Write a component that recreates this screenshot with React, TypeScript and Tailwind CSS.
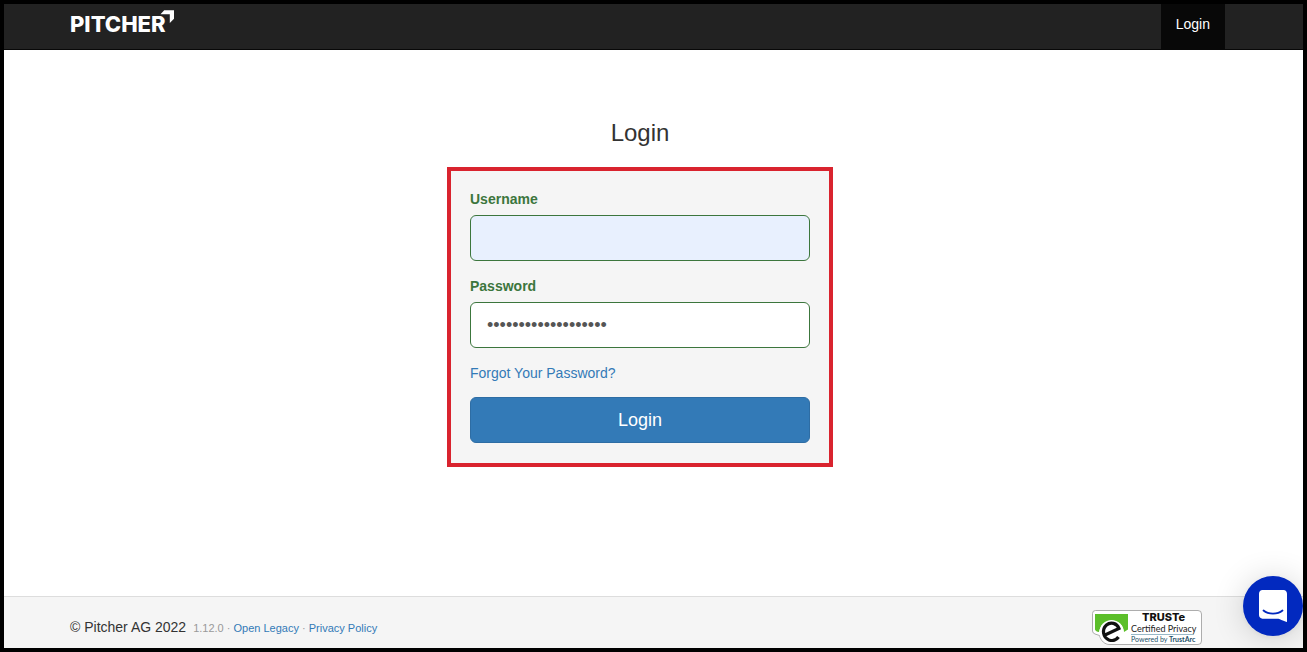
import React, { useState } from 'react';

const container = 'mx-auto w-full max-w-[1170px] px-[15px]';

function Logo() {
  return (
    <a href="#home" className="flex items-start" aria-label="Pitcher">
      <span className="pt-[10px] font-['Inter',sans-serif] text-[22px] leading-5 font-extrabold text-white">
        PITCHER
      </span>
      <svg viewBox="0 0 14 14" className="mt-1.5 -ml-1.5 h-[14px] w-[14px]" aria-hidden="true">
        <path d="M4.200 .3H14V8.800L9.800 13V4.300H.5Z" fill="#fff" />
      </svg>
    </a>
  );
}

function Header() {
  return (
    <header className="border-b border-[#080808] bg-[#222] pr-[27px]">
      <div className="mx-auto flex h-[45px] w-full max-w-[1170px] items-stretch justify-between pl-[15px]">
        <Logo />
        <nav className="flex">
          <a href="#login" className="bg-[#080808] px-[15px] py-[10px] text-sm leading-5 text-white">
            Login
          </a>
        </nav>
      </div>
    </header>
  );
}

function LoginForm() {
  const [username, setUsername] = useState('');
  const [password, setPassword] = useState('pitcher-demo-accoun');

  return (
    <form
      onSubmit={(e) => e.preventDefault()}
      className="w-full max-w-[386px] border-4 border-[#d9232e] bg-[#f5f5f5] px-[19px] pt-[18px] pb-5"
    >
      <label htmlFor="username" className="mb-1.5 block text-sm leading-5 font-bold text-[#3c763d]">
        Username
      </label>
      <input
        id="username"
        type="text"
        value={username}
        onChange={(e) => setUsername(e.target.value)}
        className="mb-[15px] block h-[46px] w-full rounded-md border border-[#3c763d] bg-[#e8f0fe] px-4 text-lg text-[#555] outline-none"
      />
      <label htmlFor="password" className="mb-1.5 block text-sm leading-5 font-bold text-[#3c763d]">
        Password
      </label>
      <input
        id="password"
        type="password"
        value={password}
        onChange={(e) => setPassword(e.target.value)}
        className="mb-[15px] block h-[46px] w-full rounded-md border border-[#3c763d] bg-white px-4 text-lg text-[#555] outline-none"
      />
      <a href="#forgot" className="mb-[14px] block text-sm leading-5 text-[#337ab7]">
        Forgot Your Password?
      </a>
      <button
        type="submit"
        className="block h-[46px] w-full rounded-md border border-[#2e6da4] bg-[#337ab7] text-lg text-white"
      >
        Login
      </button>
    </form>
  );
}

function PrivacyBadge() {
  return (
    <a href="#truste" aria-label="TRUSTe Certified Privacy">
      <svg viewBox="0 0 110 35" className="block h-[35px] w-[110px]">
        <path
          d="M3.500 .5H106a3.500 3.500 0 0 1 3.500 3.500V31a3.500 3.500 0 0 1-3.500 3.500H18C12.500 34.500 9 31 7.500 25.500L3 24A3.500 3.500 0 0 1 .5 21V3.500A3 3 0 0 1 3.500 .5Z"
          fill="#fff"
          stroke="#999"
          strokeWidth=".8"
        />
        <path d="M3 4H36V19.500L32 22C31 7 10 7 7 22C5 22 3.500 21 3 19.500Z" fill="#5cbf2a" />
        <circle cx="19.500" cy="22" r="12" fill="#fff" />
        <path
          d="M13 25L27 18.500C25 13 18.500 11.500 14.500 15C9.500 19.500 11 27.500 17 30C20.500 31.300 24.500 30 26.500 27"
          fill="none"
          stroke="#111"
          strokeWidth="3.200"
        />
        <text x="50" y="11" fontFamily="Inter, sans-serif" fontSize="11" fontWeight="800" fill="#111">
          TRUSTe
        </text>
        <text x="39" y="22" fontFamily="Lato, sans-serif" fontSize="9" fill="#222">
          Certified Privacy
        </text>
        <path d="M39 24.500H102" stroke="#6b9bb0" strokeWidth=".7" />
        <text x="39" y="32" fontFamily="Lato, sans-serif" fontSize="7" fill="#1d5068">
          Powered by <tspan fontWeight="700">TrustArc</tspan>
        </text>
      </svg>
    </a>
  );
}

function Footer() {
  return (
    <footer className="border-t border-[#ddd] bg-[#f5f5f5] pr-[27px]">
      <div className={`${container} flex h-[51px] items-start justify-between`}>
        <p className="pt-5 text-sm leading-5 text-[#333]">
          © Pitcher AG 2022
          <small className="ml-[7px] text-[11px] text-[#999]">
            1.12.0 · <a href="#legacy" className="text-[#337ab7]">Open Legacy</a> ·{' '}
            <a href="#privacy" className="text-[#337ab7]">Privacy Policy</a>
          </small>
        </p>
        <div className="pt-[13px] pr-2">
          <PrivacyBadge />
        </div>
      </div>
    </footer>
  );
}

function ChatButton() {
  return (
    <button
      type="button"
      aria-label="Open chat"
      className="fixed right-1 bottom-4 flex h-[60px] w-[60px] items-center justify-center rounded-full bg-[#0229bf] shadow-[0_1px_6px_rgba(0,0,0,0.06),0_2px_32px_rgba(0,0,0,0.16)]"
    >
      <svg viewBox="0 0 28 32" className="h-8 w-7" aria-hidden="true">
        <path d="M28 32s-4.714-1.855-8.527-3.340H3.437C1.540 28.660 0 27.026 0 25.013V3.644C0 1.633 1.540 0 3.437 0h21.125C26.460 0 28 1.632 28 3.644V32Z" fill="#fff" />
        <path d="M4.500 20.500C9.500 24.600 18.500 24.600 23.500 20.500" fill="none" stroke="#0229bf" strokeWidth="1.800" strokeLinecap="round" />
      </svg>
    </button>
  );
}

export default function App() {
  return (
    <div className="flex min-h-screen flex-col border-4 border-black bg-white font-['Liberation_Sans',Arial,sans-serif]">
      <Header />
      <main className="flex grow flex-col items-center pt-[70px] pr-[27px]">
        <h1 className="mb-[21px] text-2xl leading-[26px] text-[#333]">Login</h1>
        <LoginForm />
      </main>
      <Footer />
      <ChatButton />
    </div>
  );
}
